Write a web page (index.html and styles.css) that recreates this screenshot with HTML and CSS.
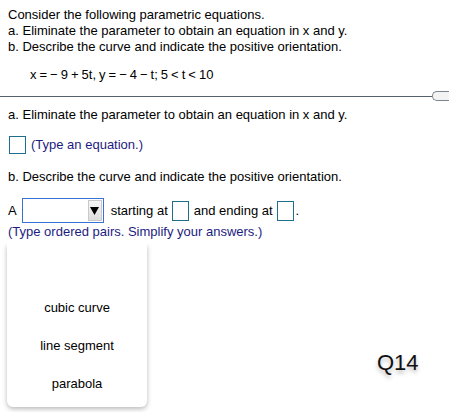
FILE: index.html
```html
<!DOCTYPE html>
<html>
<head>
<meta charset="utf-8">
<link rel="stylesheet" href="styles.css">
</head>
<body>
<div class="intro">
  <div class="line">Consider the following parametric equations.</div>
  <div class="line"><span class="lbl">a</span>. Eliminate the parameter to obtain an equation in x and y.</div>
  <div class="line"><span class="lbl">b</span>. Describe the curve and indicate the positive orientation.</div>
  <div class="equation">x = − 9 + 5t, y = − 4 − t; 5 &lt; t &lt; 10</div>
</div>
<div class="divider">
  <div class="rule"></div>
  <div class="pill"></div>
</div>
<div class="answers">
  <div class="line"><span class="lbl">a</span>. Eliminate the parameter to obtain an equation in x and y.</div>
  <div class="row row-a">
    <span class="box box-sq"></span>
    <span class="hint">(Type an equation.)</span>
  </div>
  <div class="line part-b"><span class="lbl">b</span>. Describe the curve and indicate the positive orientation.</div>
  <div class="row row-b">
    <span class="word">A</span>
    <span class="select"><span class="select-btn"><svg width="9" height="8" viewBox="0 0 9 8"><polygon points="0,0 9,0 4.5,8" fill="#000"/></svg></span></span>
    <span class="word w-start">starting at</span>
    <span class="box box-tall"></span>
    <span class="word w-end">and ending at</span>
    <span class="box box-tall"></span>
    <span class="word w-dot">.</span>
  </div>
  <div class="line hint">(Type ordered pairs. Simplify your answers.)</div>
  <div class="below">
    <div class="menu">
      <div class="item">cubic curve</div>
      <div class="item">line segment</div>
      <div class="item">parabola</div>
    </div>
    <div class="qlabel">Q14</div>
  </div>
</div>
</body>
</html>
```

FILE: styles.css
```css
html, body {
  margin: 0;
  padding: 0;
  background: #ffffff;
}
body {
  font-family: "Liberation Sans", Arial, sans-serif;
  font-size: 13px;
  color: #000;
  width: 449px;
  height: 412px;
  overflow: hidden;
}
.line {
  line-height: 16px;
  white-space: nowrap;
}
.lbl {
  color: #000;
}
.intro {
  padding: 7px 8px 0 8px;
}
.equation {
  margin-top: 12px;
  padding-left: 22px;
  line-height: 16px;
  word-spacing: -0.6px;
  white-space: nowrap;
}
.divider {
  margin-top: 8px;
  height: 10px;
  display: flex;
  align-items: center;
}
.rule {
  flex: 1;
  height: 0;
  border-top: 1px solid #56616c;
}
.pill {
  width: 16px;
  height: 8px;
  border: 1px solid #7b858e;
  border-right: none;
  border-radius: 5px 0 0 5px;
  background: #f3f3f3;
}
.answers {
  padding: 6px 8px 0 8px;
}
.row {
  display: flex;
  align-items: center;
  white-space: nowrap;
}
.row-a {
  margin-top: 13px;
  height: 18px;
}
.box {
  display: inline-block;
  box-sizing: border-box;
  border: 1px solid #1f6f8c;
  background: #fff;
}
.box-sq {
  width: 17px;
  height: 18px;
  margin-left: 1px;
}
.hint {
  color: #1c1c80;
  line-height: 16px;
}
.row-a .hint {
  margin-left: 5px;
}
.part-b {
  margin-top: 15px;
}
.row-b {
  margin-top: 13px;
  height: 25px;
}
.select {
  box-sizing: border-box;
  width: 82px;
  height: 25px;
  border: 1px solid #3a6fd4;
  margin-left: 5px;
  padding: 1px;
  display: flex;
  justify-content: flex-end;
  background: #fff;
}
.select-btn {
  box-sizing: border-box;
  width: 14px;
  height: 21px;
  border: 1px solid #c9c9c9;
  background: linear-gradient(#f6f6f6, #dedede);
  display: flex;
  align-items: center;
  justify-content: center;
}
.w-start {
  margin-left: 7px;
  margin-right: 4px;
}
.box-tall {
  width: 17px;
  height: 20px;
}
.w-end {
  margin-left: 5px;
  margin-right: 4px;
}
.w-dot {
  margin-left: 2px;
}
.row-b + .line {
  margin-top: 1px;
}
.below {
  position: relative;
  height: 172px;
}
.menu {
  position: absolute;
  left: -1px;
  top: 4px;
  width: 140px;
  height: 163px;
  box-sizing: border-box;
  padding-top: 56px;
  background: #fff;
  border-radius: 0 0 6px 6px;
  box-shadow: 0 2px 5px rgba(0, 0, 0, 0.28);
  clip-path: inset(0 -12px -12px -12px);
  display: flex;
  flex-direction: column;
  align-items: center;
  gap: 22px;
}
.item {
  line-height: 16px;
  text-align: center;
  color: #000;
}
.qlabel {
  padding-top: 112px;
  padding-left: 369px;
  font-size: 22px;
  line-height: 22px;
  color: #111;
  text-shadow: 0 3px 4px rgba(0, 0, 0, 0.28);
}
```
